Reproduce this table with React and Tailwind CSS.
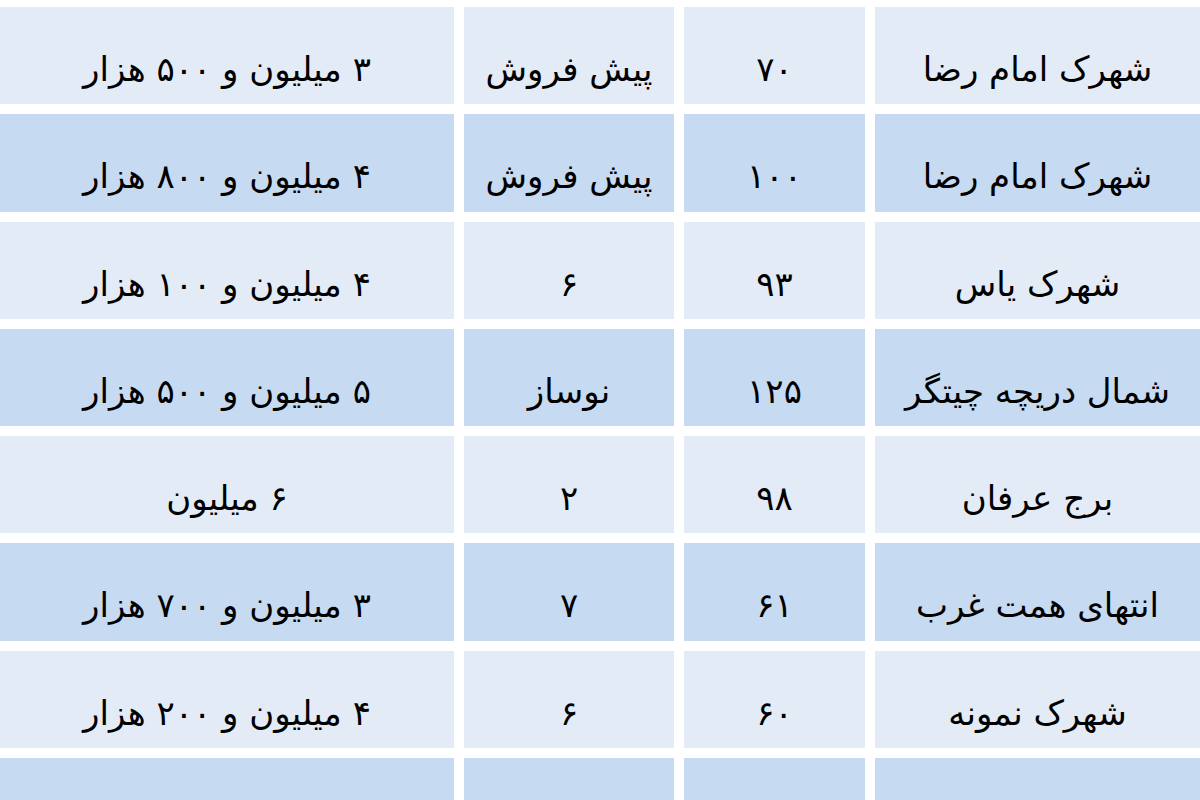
import React from 'react';

// Rows: [location, area, age, price]
const ROWS = [
  ['شهرک امام رضا', '۷۰', 'پیش فروش', '۳ میلیون و ۵۰۰ هزار'],
  ['شهرک امام رضا', '۱۰۰', 'پیش فروش', '۴ میلیون و ۸۰۰ هزار'],
  ['شهرک یاس', '۹۳', '۶', '۴ میلیون و ۱۰۰ هزار'],
  ['شمال دریچه چیتگر', '۱۲۵', 'نوساز', '۵ میلیون و ۵۰۰ هزار'],
  ['برج عرفان', '۹۸', '۲', '۶ میلیون'],
  ['انتهای همت غرب', '۶۱', '۷', '۳ میلیون و ۷۰۰ هزار'],
  ['شهرک نمونه', '۶۰', '۶', '۴ میلیون و ۲۰۰ هزار'],
  ['شهرک غرب', '۸۰', '۵', '۴ میلیون و ۳۰۰ هزار'],
];

const Cell = ({ children, dark }) => (
  <div
    className={`flex items-start justify-center pt-[45px] text-[34px] leading-none text-black ${
      dark ? 'bg-[#c6daf1]' : 'bg-[#e3ebf7]'
    }`}
  >
    {children}
  </div>
);

export default function App() {
  return (
    <div
      dir="rtl"
      className="w-[1200px] h-[800px] overflow-hidden bg-white pt-[7px]"
      style={{ fontFamily: '"DejaVu Sans", "Noto Sans", sans-serif' }}
    >
      <div className="grid grid-cols-[325px_181px_210px_1fr] auto-rows-[97.3px] gap-x-[10px] gap-y-[10px]">
        {ROWS.map((row, i) =>
          row.map((text, j) => (
            <Cell key={`${i}-${j}`} dark={i % 2 === 1}>
              {text}
            </Cell>
          ))
        )}
      </div>
    </div>
  );
}
